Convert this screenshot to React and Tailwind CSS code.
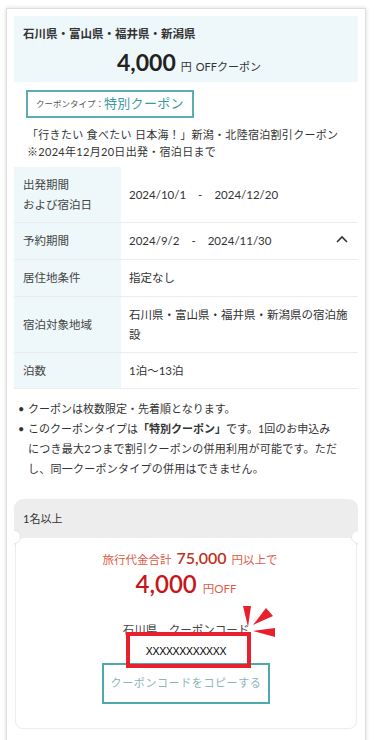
import React from "react";

const rows = [
  { label: ["出発期間", "および宿泊日"], value: <span>2024/10/1<span className="mx-[12px]">-</span>2024/12/20</span>, h: "h-[56px]" },
  { label: ["予約期間"], value: <span>2024/9/2<span className="mx-[12px]">-</span>2024/11/30</span>, h: "h-[37px]", chevron: true },
  { label: ["居住地条件"], value: <span>指定なし</span>, h: "h-[37px]" },
  { label: ["宿泊対象地域"], value: <span>石川県・富山県・福井県・新潟県の宿泊施<br />設</span>, h: "h-[56px]" },
  { label: ["泊数"], value: <span>1泊〜13泊</span>, h: "h-[36px]" },
];

export default function App() {
  return (
    <div
      className="relative w-[374px] h-[740px] overflow-hidden bg-white text-[#333]"
      style={{ fontFamily: 'Lato, "Noto Sans CJK JP", sans-serif' }}
    >
      <div className="ml-[6px] mt-[8px] w-[360px] h-[760px] border border-[#dedede] shadow-[0_0_4px_rgba(0,0,0,0.15)] px-[7px] pt-[7px]">
        {/* header */}
        <div className="bg-[#eef7f9] px-[9px] pt-[10px] pb-[6px]">
          <div className="text-[11.5px] font-bold leading-[16px]">石川県・富山県・福井県・新潟県</div>
          <div className="mt-[6px] h-[28px] flex items-baseline justify-center pl-[6px]">
            <span className="text-[23px] leading-[28px] font-bold text-[#222]" style={{ fontFamily: "Lato, sans-serif" }}>4,000</span>
            <span className="ml-[5px] text-[11px]">円</span>
            <span className="ml-[4px] text-[11px]">OFFクーポン</span>
          </div>
        </div>

        {/* badge */}
        <div className="mt-[8px] ml-[12px] inline-flex h-[28px] items-center border-2 border-[#5aaeb2] px-[8px]">
          <span className="text-[8.5px] text-[#555]">クーポンタイプ：</span>
          <span className="text-[13px] text-[#3b9aa0] tracking-[0.3px]">特別クーポン</span>
        </div>

        {/* description */}
        <div className="mt-[8px] px-[13px] text-[11px] leading-[17px] tracking-[0.3px] whitespace-nowrap">
          <div>「行きたい 食べたい 日本海！」新潟・北陸宿泊割引クーポン</div>
          <div>※2024年12月20日出発・宿泊日まで</div>
        </div>

        {/* table */}
        <div className="mt-[7px] text-[11.5px]">
          {rows.map((r, i) => (
            <div key={i} className={`grid grid-cols-[107px_1fr] ${r.h} border-b border-[#ececec]`}>
              <div className="bg-[#eef7f9] flex flex-col justify-center pl-[9px] leading-[20px] text-[#444]">
                {r.label.map((l, j) => (
                  <div key={j}>{l}</div>
                ))}
              </div>
              <div className="flex items-center justify-between pl-[8px] pr-[10px] leading-[20px]">
                {r.value}
                {r.chevron && (
                  <svg width="12" height="8" viewBox="0 0 12 8" className="mb-[4px]">
                    <polyline points="1,7 6,2 11,7" fill="none" stroke="#333" strokeWidth="1.6" />
                  </svg>
                )}
              </div>
            </div>
          ))}
        </div>

        {/* bullets */}
        <ul className="mt-[10px] pl-[4px] text-[11px] leading-[20px] whitespace-nowrap">
          <li className="flex">
            <span className="w-[10px] shrink-0">•</span>
            <span>クーポンは枚数限定・先着順となります。</span>
          </li>
          <li className="flex">
            <span className="w-[10px] shrink-0">•</span>
            <span className="flex flex-col">
              <span>
                このクーポンタイプは<b>「特別クーポン」</b>です。1回のお申込み
              </span>
              <span className="tracking-[0.25px]">につき最大2つまで割引クーポンの併用利用が可能です。ただ</span>
              <span className="tracking-[0.25px]">し、同一クーポンタイプの併用はできません。</span>
            </span>
          </li>
        </ul>

        {/* coupon area */}
        <div className="relative mt-[20px] overflow-hidden">
          <div className="bg-[#ededed] rounded-t-[9px] h-[46px] pl-[9px] pt-[10px] text-[11px] leading-[20px]">
            1名以上
          </div>
          <div className="relative -mt-[8px] mx-[1px] bg-white border border-[#ececec] rounded-[8px] pt-[8px] pb-[24px] flex flex-col items-center">
            <div className="flex items-baseline h-[24px] leading-[24px] text-[#dd5c48] pl-[8px]">
              <span className="text-[11.5px]">旅行代金合計</span>
              <span className="ml-[5px] text-[16px] font-semibold text-[#c0321f]">75,000</span>
              <span className="ml-[5px] text-[11.5px]">円以上で</span>
            </div>
            <div className="flex items-baseline h-[30px] leading-[30px] mt-[-1px]">
              <span className="text-[24px] font-semibold text-[#c4161c]">4,000</span>
              <span className="ml-[6px] text-[11.5px] text-[#dd5c48]">円OFF</span>
            </div>
            <div className="mt-[22px] h-[18px] leading-[18px] text-[11.5px] text-[#444]">石川県　クーポンコード</div>
            <div className="mt-[3px] h-[18px] leading-[18px] text-[10.5px] text-black tracking-[-0.3px]" style={{ fontFamily: '"Liberation Sans", sans-serif' }}>
              XXXXXXXXXXXX
            </div>
            <div className="mt-[3px] w-[168px] h-[41px] border-2 border-[#4ea9ae] flex items-center justify-center text-[11px] tracking-[0.6px] text-[#8fb4bc]">
              クーポンコードをコピーする
            </div>
          </div>
          <div className="absolute left-[-7px] top-[31px] w-[14px] h-[14px] rounded-full bg-white border border-[#e6e6e6]" />
          <div className="absolute right-[-7px] top-[31px] w-[14px] h-[14px] rounded-full bg-white border border-[#e6e6e6]" />
        </div>
      </div>

      {/* red highlight overlay */}
      <div className="absolute left-[126px] top-[632px] w-[125px] h-[36px] border-4 border-[#e8202e]" />
      <svg className="absolute left-[240px] top-[600px]" width="40" height="40" viewBox="0 0 40 40">
        <polygon points="3,6 11,6 8,27" fill="#e8202e" />
        <polygon points="26,8 33,16 13,25" fill="#e8202e" />
        <polygon points="35,28 35,37 13,31" fill="#e8202e" />
      </svg>
    </div>
  );
}
